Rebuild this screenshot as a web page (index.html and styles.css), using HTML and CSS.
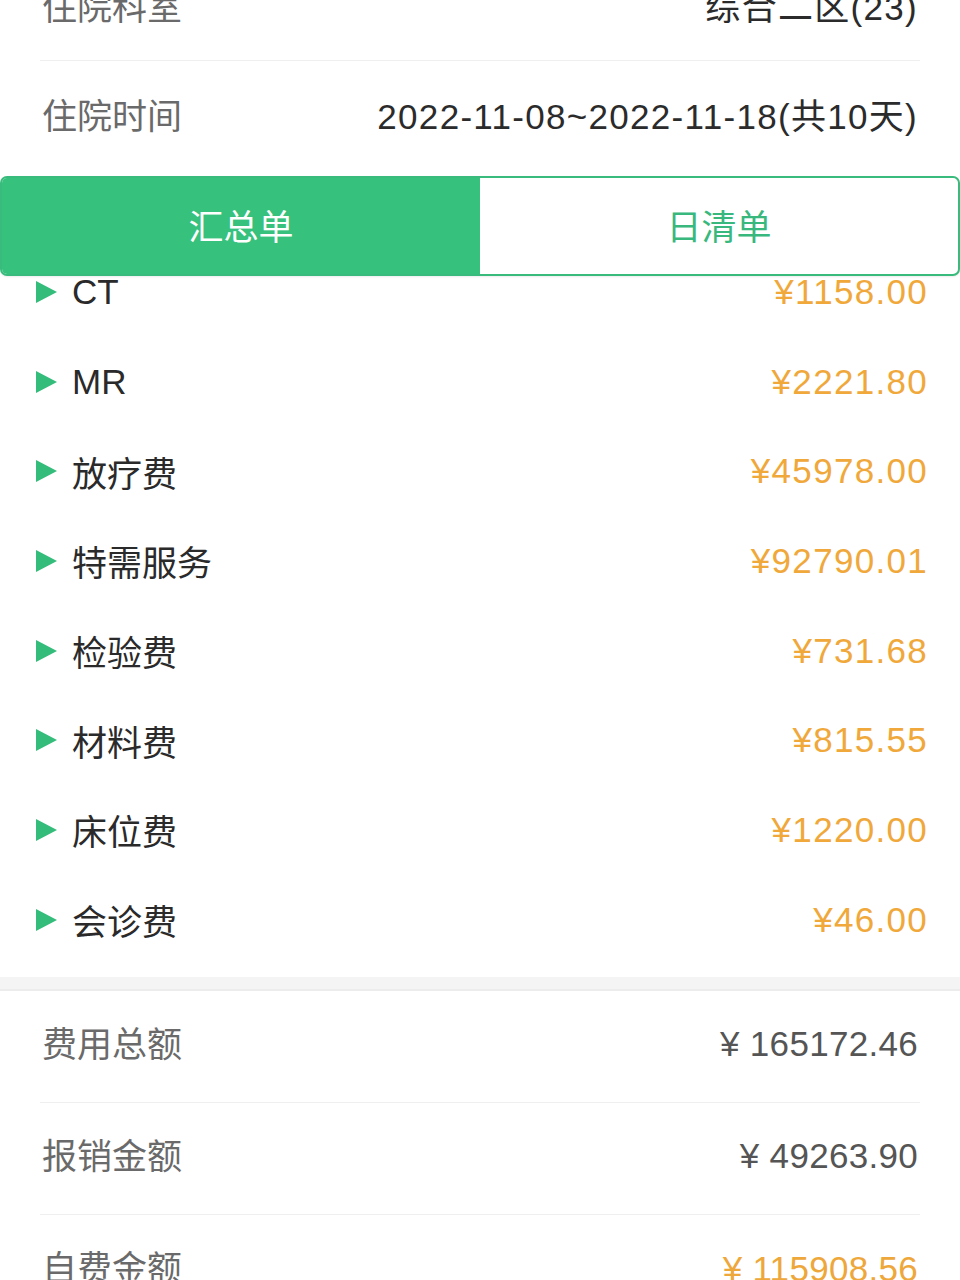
FILE: index.html
```html
<!DOCTYPE html>
<html lang="zh-CN">
<head>
<meta charset="utf-8">
<title>费用清单</title>
<link rel="stylesheet" href="styles.css">
</head>
<body>
<div class="page">
  <section class="info">
    <div class="info-row row-dept"><span class="label">住院科室</span><span class="value">综合二区(23)</span></div>
    <div class="info-row row-time"><span class="label">住院时间</span><span class="value">2022-11-08~2022-11-18(共10天)</span></div>
  </section>

  <nav class="tabs">
    <div class="tab tab-active">汇总单</div>
    <div class="tab">日清单</div>
  </nav>

  <ul class="items">
    <li class="item"><span class="name"><i class="tri"></i>CT</span><span class="amount">¥1158.00</span></li>
    <li class="item"><span class="name"><i class="tri"></i>MR</span><span class="amount">¥2221.80</span></li>
    <li class="item"><span class="name"><i class="tri"></i>放疗费</span><span class="amount">¥45978.00</span></li>
    <li class="item"><span class="name"><i class="tri"></i>特需服务</span><span class="amount">¥92790.01</span></li>
    <li class="item"><span class="name"><i class="tri"></i>检验费</span><span class="amount">¥731.68</span></li>
    <li class="item"><span class="name"><i class="tri"></i>材料费</span><span class="amount">¥815.55</span></li>
    <li class="item"><span class="name"><i class="tri"></i>床位费</span><span class="amount">¥1220.00</span></li>
    <li class="item"><span class="name"><i class="tri"></i>会诊费</span><span class="amount">¥46.00</span></li>
  </ul>

  <div class="sep"></div>

  <section class="summary">
    <div class="info-row"><span class="label">费用总额</span><span class="sum">¥ 165172.46</span></div>
    <div class="info-row"><span class="label">报销金额</span><span class="sum">¥ 49263.90</span></div>
    <div class="info-row last"><span class="label">自费金额</span><span class="sum sum-self">¥ 115908.56</span></div>
  </section>
</div>
</body>
</html>
```

FILE: styles.css
```css
html, body {
  margin: 0;
  padding: 0;
  background: #ffffff;
}
body {
  font-family: "Liberation Sans", "Noto Sans CJK SC", sans-serif;
  overflow: hidden;
}
.page {
  width: 960px;
  margin-top: -51px;
}
.info-row {
  box-sizing: border-box;
  height: 112px;
  margin: 0 40px;
  padding: 0 2px 10px 2px;
  display: flex;
  justify-content: space-between;
  align-items: center;
  border-bottom: 1px solid #efefef;
  font-size: 35px;
}
.info-row.last {
  border-bottom: none;
}
.row-dept {
  padding-bottom: 0;
}
.row-time {
  height: 115px;
  border-bottom: none;
}
.label {
  color: #6a6a6a;
}
.value {
  color: #2b2b2b;
  letter-spacing: 1.3px;
}
.tabs {
  position: relative;
  z-index: 2;
  display: flex;
  box-sizing: border-box;
  height: 100px;
  border: 2px solid #38bb7c;
  border-radius: 7px;
  overflow: hidden;
  background: #ffffff;
  box-shadow: 0 1px 2px rgba(0,0,0,0.08);
}
.tab {
  flex: 1;
  display: flex;
  align-items: center;
  justify-content: center;
  padding-bottom: 4px;
  font-size: 35px;
  color: #38b87c;
}
.tab-active {
  background: #36c17c;
  color: #ffffff;
}
.items {
  list-style: none;
  margin: -29px 0 0 0;
  padding: 0;
}
.item {
  height: 89.7px;
  display: flex;
  align-items: center;
  justify-content: space-between;
  padding: 0 32px 0 36px;
  font-size: 35px;
}
.name {
  display: flex;
  align-items: center;
  color: #2a2a2a;
}
.tri {
  display: inline-block;
  width: 0;
  height: 0;
  border-top: 11px solid transparent;
  border-bottom: 11px solid transparent;
  border-left: 21px solid #33bc7a;
  margin-right: 15px;
}
.amount {
  color: #f0a83a;
  letter-spacing: 1.3px;
}
.sep {
  margin-top: 12px;
  height: 14px;
  background: #f4f4f4;
  border-bottom: 2px solid #ececec;
  box-sizing: border-box;
}
.sum {
  color: #555555;
  letter-spacing: 0.3px;
  padding-top: 6px;
}
.sum-self {
  color: #eea73a;
}
```
